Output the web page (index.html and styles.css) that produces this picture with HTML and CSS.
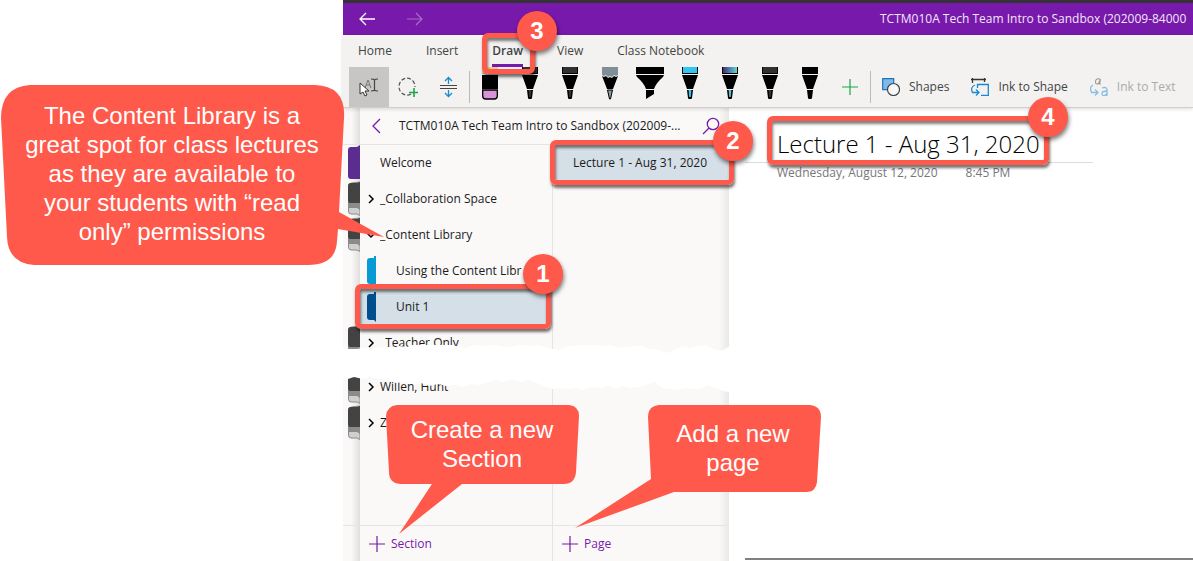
FILE: index.html
```html
<!DOCTYPE html>
<html lang="en">
<head>
  <meta charset="UTF-8">
  <meta name="viewport" content="width=device-width, initial-scale=1.0">
  <title>Content Library</title>
  <link rel="stylesheet" href="styles.css">
</head>
<body>
  <!-- shared shapes -->
  <svg class="defs" width="0" height="0" aria-hidden="true">
    <defs>
      <linearGradient id="galaxy"><stop offset="0" stop-color="#4b2a6b"/><stop offset=".5" stop-color="#4a86b8"/><stop offset="1" stop-color="#6fd0c4"/></linearGradient>
      <symbol id="pen" viewBox="0 0 40 40">
        <path d="M12 0h16v7H12z" fill="#000"/>
        <path d="M13 0h14v6H13z" fill="currentColor"/>
        <path d="M12 8h16l-5 14h-6z" fill="#000"/>
        <path d="M17 23h6l-1 8q-.3 1-1 1h-2q-.7 0-1-1z" fill="#000"/>
        <path d="M18.600 23h2.800l-.6 7h-1.600z" fill="currentColor"/>
      </symbol>
      <symbol id="plus" viewBox="0 0 18 18"><path d="M9 1v16M1 9h16" fill="none" stroke="currentColor" stroke-width="1.200"/></symbol>
      <symbol id="chevron" viewBox="0 0 8 10"><path d="M2 1l4 4-4 4" fill="none" stroke="#000" stroke-width="1.500"/></symbol>
      <symbol id="group" viewBox="0 0 12 36">
        <path d="M12 34.500L9 33H3q-2.500 0-2.500-3V6q0-4 3-4L12 1z" fill="#cfcfcf" stroke="#8a8a8a"/>
        <path d="M12 29L9 27H1V6q0-4 3-4l8-1z" fill="#8b8b8b"/>
        <path d="M12 22H2q-2 0-2-3V5q0-3 3-3h6l3-1z" fill="#434343"/>
      </symbol>
      <symbol id="section" viewBox="0 0 9 30"><path d="M9 30L7 28H3q-3 0-3-3V5q0-3 3-3h4V0h2z" fill="currentColor"/></symbol>
    </defs>
  </svg>

  <div class="app">
    <header class="titleBar">
      <button class="navBtn" aria-label="Back"><svg width="16" height="14" viewBox="0 0 16 14"><path d="M7 1L1 7l6 6M1 7h15" fill="none" stroke="#fff" stroke-width="1.300"/></svg></button>
      <button class="navBtn forward" aria-label="Forward"><svg width="16" height="14" viewBox="0 0 16 14"><path d="M9 1l6 6-6 6M15 7H0" fill="none" stroke="#a86cc8" stroke-width="1.200"/></svg></button>
      <span class="docName">TCTM010A Tech Team Intro to Sandbox (202009-84000</span>
    </header>

    <div class="ribbon">
      <nav class="tabs">
        <a href="#">Home</a>
        <a href="#">Insert</a>
        <a href="#" class="active">Draw<span class="mark markDraw"><b class="badge">3</b></span></a>
        <a href="#">View</a>
        <a href="#">Class Notebook</a>
      </nav>
      <div class="tools">
        <button class="tool selected" aria-label="Select or type">
          <svg width="40" height="40" viewBox="0 0 40 40"><path d="M16 21l3-8 3 8M17 18h4" fill="none" stroke="#777"/><path d="M22 12q3 0 3.500 1 .5-1 3.500-1M25.500 13v10M22 24q3 0 3.500-1 .5 1 3.500 1" fill="none" stroke="#444" stroke-width="1.200"/><path d="M11 16v11l3-2 2 4 2-1-2-4h4z" fill="#fff" stroke="#333"/></svg>
        </button>
        <button class="tool" aria-label="Lasso select">
          <svg width="40" height="40" viewBox="0 0 40 40"><path d="M22 27a8 8.500 0 1 1 4-7" fill="none" stroke="#555" stroke-width="1.200" stroke-dasharray="4 2"/><path d="M25 21v9M20 25.500h9" stroke="#1ea34a" stroke-width="1.600"/></svg>
        </button>
        <button class="tool" aria-label="Insert space">
          <svg width="40" height="40" viewBox="0 0 40 40"><path d="M11 18.500h17M11 21.500h17" stroke="#444"/><path d="M19.500 17v-6M16 14l3.500-3.500L23 14M19.500 23v6M16 26l3.500 3.500L23 26" fill="none" stroke="#1b88d0" stroke-width="1.300"/></svg>
        </button>
        <span class="divider"></span>
        <button class="tool" aria-label="Eraser">
          <svg width="40" height="40" viewBox="0 0 40 40"><path d="M12 0h16v7H12z" fill="#e9cf83"/><path d="M12 8h16v14H12z"/><path d="M12.700 23h14.600v6q0 3-3 3h-8.600q-3 0-3-3z" fill="#d993db" stroke="#000" stroke-width="1.300"/></svg>
        </button>
        <button class="tool dark" aria-label="Pen 1"><svg width="40" height="40"><use href="#pen"/></svg></button>
        <button class="tool dark" aria-label="Pen 2"><svg width="40" height="40"><use href="#pen"/></svg></button>
        <button class="tool" aria-label="Pencil">
          <svg width="40" height="40" viewBox="0 0 40 40"><path d="M12 0h16v8l-2 1-2-1-2 2-2-1-2 1-2-2-2 1-2-1z" fill="#7f8f98"/><path d="M12 9l2 1 2-1 2 2 2-1 2 1 2-2 2 1 2-1-5 13h-6z"/><path d="M17.500 23h5L20.500 32h-1z" fill="#8a9aa2" stroke="#000"/></svg>
        </button>
        <button class="tool" aria-label="Highlighter">
          <svg width="40" height="40" viewBox="0 0 40 40"><path d="M6 0h28v7H6zM6 8h28l-1 2q-7 6-9 12h-8Q14 16 7 10zM16 23h8v4l-8 5z"/></svg>
        </button>
        <button class="tool sky" aria-label="Pen 3"><svg width="40" height="40"><use href="#pen"/></svg></button>
        <button class="tool teal" aria-label="Galaxy pen">
          <svg width="40" height="40" viewBox="0 0 40 40"><use href="#pen"/><path d="M13 0h14v6H13z" fill="url(#galaxy)"/></svg>
        </button>
        <button class="tool dark" aria-label="Pen 4"><svg width="40" height="40"><use href="#pen"/></svg></button>
        <button class="tool black" aria-label="Pen 5"><svg width="40" height="40"><use href="#pen"/></svg></button>
        <button class="tool add" aria-label="Add pen"><svg width="18" height="18"><use href="#plus"/></svg></button>
        <span class="divider"></span>
        <button class="command">
          <svg width="18" height="18" viewBox="0 0 18 18"><path d="M.7.700h11v11H.7z" fill="#80baea" stroke="#1b74bd" stroke-width="1.200"/><circle cx="11.500" cy="11.500" r="6" fill="#f8f8f8" stroke="#444" stroke-width="1.200"/></svg>
          Shapes
        </button>
        <button class="command">
          <svg width="18" height="18" viewBox="0 0 18 18" fill="none"><path d="M0 1.500h15M1.500 0v5M13.500 0v4" stroke="#333" stroke-width="1.300"/><path d="M6.500 10V6.500h10.800v10.800H10M4 7Q-1 9 1.500 14.500h6.500M5 11.500l3 3-3 3" stroke="#1b88d0" stroke-width="1.300"/></svg>
          Ink to Shape
        </button>
        <button class="command" disabled>
          <svg width="18" height="18" viewBox="0 0 18 18" fill="none"><path d="M10 1Q5.500 0 5.500 4q0 3 3 1.500L10.500 1 9.500 6H11" stroke="#999" stroke-width="1.100"/><path d="M3 7Q-1 9 1.500 14.500H8M5 11.500l3 3-3 3M12 10q4.500-1.500 5 1.500V18M17 13q-5 0-5 2.500t2.500 2q2.500-.5 2.500-3" stroke="#83bfe3" stroke-width="1.300"/></svg>
          Ink to Text
        </button>
      </div>
    </div>

    <main class="content">
      <aside class="rail" aria-hidden="true">
        <div class="railHead"></div>
        <div class="railTabs">
          <span class="railTab"><svg class="violet" width="12" height="36" viewBox="0 0 12 36"><path d="M12 34H3q-3 0-3-3V5q0-3 3-3h6l3-2z" fill="currentColor"/></svg></span>
          <span class="railTab"><svg width="12" height="36"><use href="#group"/></svg></span>
          <span class="railTab"><svg width="12" height="36"><use href="#group"/></svg></span>
          <span class="railTab"></span>
          <span class="railTab"></span>
          <span class="railTab"><svg width="12" height="36"><use href="#group"/></svg></span>
          <span class="railTab afterTear"><svg width="12" height="36"><use href="#group"/></svg></span>
          <span class="railTab"><svg width="12" height="36"><use href="#group"/></svg></span>
        </div>
        <div class="railFoot"></div>
      </aside>

      <section class="panel">
        <div class="panelHead">
          <button class="iconBtn" aria-label="Back to notebooks"><svg width="10" height="16" viewBox="0 0 10 16"><path d="M9 1L2 8l7 7" fill="none" stroke="#7719aa" stroke-width="1.300"/></svg></button>
          <span class="notebook">TCTM010A Tech Team Intro to Sandbox (202009-...</span>
          <button class="iconBtn" aria-label="Search"><svg width="18" height="18" viewBox="0 0 18 18"><circle cx="11" cy="7" r="5.700" fill="none" stroke="#7719aa" stroke-width="1.300"/><path d="M7 11l-6 6" stroke="#7719aa" stroke-width="1.300"/></svg></button>
        </div>
        <div class="columns">
          <div class="column sections">
            <ul class="list">
              <li class="row"><span class="arrow"></span><a href="#">Welcome</a></li>
              <li class="row"><span class="arrow"><svg width="8" height="10"><use href="#chevron"/></svg></span><a href="#">_Collaboration Space</a></li>
              <li class="row"><span class="arrow open"><svg width="8" height="10"><use href="#chevron"/></svg></span><a href="#">_Content Library</a></li>
              <li class="row child long"><svg class="cyan" width="9" height="30"><use href="#section"/></svg><a href="#">Using the Content Libr</a></li>
              <li class="row child current"><svg class="navy" width="9" height="30"><use href="#section"/></svg><a href="#">Unit 1</a><span class="mark markUnit"><b class="badge">1</b></span></li>
              <li class="row"><span class="arrow"><svg width="8" height="10"><use href="#chevron"/></svg></span><a href="#">_Teacher Only</a></li>
              <li class="row afterTear"><span class="arrow"><svg width="8" height="10"><use href="#chevron"/></svg></span><a href="#">Willen, Hunt</a></li>
              <li class="row"><span class="arrow"><svg width="8" height="10"><use href="#chevron"/></svg></span><a href="#">Z</a></li>
            </ul>
            <button class="addBtn"><svg width="18" height="18"><use href="#plus"/></svg>Section</button>
          </div>
          <div class="column pages">
            <ul class="list">
              <li class="row current"><a href="#">Lecture 1 - Aug 31, 2020</a><span class="mark markPage"><b class="badge">2</b></span></li>
            </ul>
            <button class="addBtn"><svg width="18" height="18"><use href="#plus"/></svg>Page</button>
          </div>
        </div>
      </section>

      <article class="page">
        <div class="pageTitle">
          <h1>Lecture 1 - Aug 31, 2020</h1>
          <span class="mark markTitle"><b class="badge">4</b></span>
        </div>
        <p class="stamp"><span>Wednesday, August 12, 2020</span><span>8:45 PM</span></p>
        <hr class="pageEnd">
      </article>

      <!-- torn strip across the section list -->
      <svg class="tear" width="386" height="50" viewBox="0 0 386 50" aria-hidden="true">
        <path d="M0 4l14 0 6-1 8 1 10-2 10 1 8-2 8 1 6-3 7 0 6-3 10 3 8-1 12 3 9 2 10-3 9 1 8-2 12 3 11-1 7-2 8 2 9-1 8 3 12 2 9-4 7 0 8-3 7 2 6-1 8 2 7-1 8 3 7-1 8-1 8 0 8 3 9 1 8 3 7-3 8-4 7 2 9-2 8-1 7 4 9 2 6-4 6 0 0 43-5 2-6-1-7-3-8-3-8 4-8 0-7-1-8 2-8-1-7-1-8-6-8 3-8 2-8 1-7-2-8 2-7-2-9 2-8-1-8 3-8-2-7 1-8-1-8 1-8-3-7-3-9-3-8 2-8-3-8 3-8-2-8 2-8 3-8-1-9 3-9-2-8 1-8-2-9 2-8-3-10 1-7-2-8 1-8-3-10-1-8-2-7 2-9-2-6 2-8-1-6 1z" fill="#fff"/>
      </svg>
    </main>
  </div>

  <!-- callouts -->
  <div class="callout library">
    <svg width="390" height="184" viewBox="0 0 390 184"><path d="M30 1H315Q346 2 344 34L339 128 384 153 338 145 337 157Q336 181 308 181H34Q8 179 7 153L1 34Q1 3 30 1z" fill="#ff594b"/></svg>
    <p>The Content Library is a great spot for class lectures as they are available to your students with “read only” permissions</p>
  </div>
  <div class="callout newSection">
    <svg width="194" height="132" viewBox="0 0 194 132"><path d="M11 1H183Q193 2 193 12L190 68Q189 80 178 80H76L13 130 46 80H14Q3 79 3 68L0 12Q1 2 11 1z" fill="#ff594b"/></svg>
    <p>Create a new Section</p>
  </div>
  <div class="callout newPage">
    <svg width="247" height="126" viewBox="0 0 247 126"><path d="M84 1H235Q246 2 246 13L242 78Q241 88 231 88H99L0 124 76 75 73 13Q73 2 84 1z" fill="#ff594b"/></svg>
    <p>Add a new page</p>
  </div>
</body>
</html>
```

FILE: styles.css
```css
*{
  box-sizing: border-box;
}
body{
  margin: 0;
  position: relative;
  min-height: 100vh;
  overflow: hidden;
  background: #fff;
  color: #1b1b1b;
  font: 12px/18px "Open Sans", "Noto Sans", sans-serif;
}
a{
  color: inherit;
  text-decoration: none;
}
button{
  padding: 0;
  border: 0;
  background: none;
  color: inherit;
  font: inherit;
}
svg{
  display: block;
  flex: none;
}
ul, p, h1{
  margin: 0;
  padding: 0;
}
.defs{
  position: absolute;
}
.app{
  display: flex;
  flex-direction: column;
  min-height: 100vh;
  margin-left: 343px;
}

/* title bar */
.titleBar{
  display: flex;
  align-items: center;
  height: 35px;
  padding: 0 0 0 16px;
  border-top: 3px solid #343236;
  background: #7719aa;
  color: #f3e6fa;
  white-space: nowrap;
  overflow: hidden;
}
.navBtn.forward{
  margin-left: 32px;
}
.docName{
  margin-left: 457px;
}

/* ribbon */
.ribbon{
  position: relative;
  z-index: 2;
  border-bottom: 1px solid #d0cfce;
  background: #f3f2f1;
  color: #444;
  box-shadow: 0 1px 4px rgba(0,0,0,.15);
}
.tabs{
  display: flex;
  gap: 34px;
  height: 32px;
  padding-left: 15px;
  line-height: 32px;
}
.tabs a{
  position: relative;
}
.tabs .active{
  font-weight: 600;
  box-shadow: inset 0 -3px #7719aa;
}
.tools{
  display: flex;
  height: 40px;
  padding-left: 6px;
}
.tool{
  width: 40px;
  flex: none;
}
.tool.selected{
  background: #c8c6c4;
}
.tool.dark{
  color: #303030;
}
.tool.sky{
  color: #31c5f4;
}
.tool.teal{
  color: #5fb9c4;
}
.tool.black{
  color: #000;
}
.tool.add{
  display: flex;
  align-items: center;
  justify-content: center;
  color: #1ea34a;
}
.divider{
  width: 1px;
  height: 32px;
  margin-top: 4px;
  flex: none;
  background: #bdbbb9;
}
.command{
  display: flex;
  align-items: center;
  gap: 9px;
  padding: 0 11px;
  white-space: nowrap;
}
.command:disabled{
  color: #aaa;
}

/* notebook area */
.content{
  position: relative;
  display: flex;
  flex: 1;
}
.rail{
  display: flex;
  flex-direction: column;
  width: 17px;
  background: linear-gradient(90deg, #faf9f8 8px, #e0dfde);
}
.railHead{
  height: 37px;
  border-bottom: 1px solid #e6e5e4;
}
.railTabs{
  flex: 1;
}
.railTab{
  display: flex;
  justify-content: flex-end;
  height: 36px;
}
.railFoot{
  height: 36px;
  border-top: 1px solid #e6e5e4;
}
.afterTear{
  margin-top: 8px;
}
.violet{
  color: #5c2d91;
}
.cyan{
  color: #069bd2;
}
.navy{
  color: #004e8c;
}
.panel{
  display: flex;
  flex-direction: column;
  width: 369px;
  flex: none;
  background: linear-gradient(270deg, #e9e8e7, #faf9f8 10px);
}
.panelHead{
  display: flex;
  align-items: center;
  height: 37px;
  padding: 0 9px 0 11px;
  border-bottom: 1px solid #e6e5e4;
}
.notebook{
  flex: 1;
  padding-left: 18px;
  white-space: nowrap;
  overflow: hidden;
}
.columns{
  display: flex;
  flex: 1;
}
.column{
  display: flex;
  flex-direction: column;
}
.sections{
  width: 193px;
  border-right: 1px solid #e6e5e4;
}
.pages{
  flex: 1;
}
.list{
  flex: 1;
  list-style: none;
}
.row{
  position: relative;
  display: flex;
  align-items: center;
  height: 36px;
}
.row a{
  flex: 1;
  white-space: nowrap;
  overflow: hidden;
}
.arrow{
  display: flex;
  width: 20px;
  padding-left: 7px;
}
.arrow.open svg{
  transform: rotate(90deg);
}
.child{
  gap: 20px;
  padding-left: 7px;
}
.long{
  padding-right: 24px;
}
.current{
  background: #d5dfe8;
}
.pages .row{
  padding-left: 20px;
}
.addBtn{
  display: flex;
  align-items: center;
  gap: 5px;
  height: 36px;
  padding-left: 8px;
  border-top: 1px solid #e6e5e4;
  color: #7719aa;
}
.page{
  display: flex;
  flex-direction: column;
  flex: 1;
  padding: 17px 0 1px 16px;
}
.pageTitle{
  position: relative;
  width: 348px;
  max-width: 100%;
  padding-left: 32px;
  border-bottom: 1px solid #dcdcdc;
}
.pageTitle h1{
  color: #000;
  font-size: 24px;
  font-weight: 300;
  line-height: 37px;
  white-space: nowrap;
}
.stamp{
  display: flex;
  gap: 28px;
  padding-left: 32px;
  color: #777;
  line-height: 20px;
}
.pageEnd{
  width: 100%;
  height: 2px;
  margin: auto 0 0;
  border: 0;
  background: #808080;
}
.tear{
  position: absolute;
  left: 0;
  top: 237px;
}

/* numbered highlights */
.mark{
  position: absolute;
  z-index: 3;
  border: 5px solid #ff594b;
  border-radius: 6px;
  box-shadow: 1px 3px 3px rgba(0,0,0,.55), inset 1px 3px 3px rgba(0,0,0,.5);
}
.badge{
  position: absolute;
  top: -24px;
  right: -24px;
  width: 40px;
  height: 40px;
  border-radius: 50%;
  background: #ff594b;
  box-shadow: 1px 3px 4px rgba(0,0,0,.5);
  color: #fff;
  font: bold 24px/40px "Liberation Sans", Arial, sans-serif;
  text-align: center;
}
.markDraw{
  inset: -2px -12px -7px -10px;
}
.markDraw .badge{
  top: -27px;
  right: -27px;
}
.markUnit{
  inset: -5px 1px -4px -5px;
}
.markUnit .badge{
  top: -35px;
  right: -17px;
}
.markPage{
  inset: -5px -5px -4px -3px;
}
.markTitle{
  inset: -9px 44px -3px 22px;
}

.callout{
  position: absolute;
  z-index: 4;
  color: #fff;
  font: 24px/29px "Liberation Sans", Arial, sans-serif;
  text-align: center;
}
.callout p{
  position: absolute;
}
.library{
  left: 0;
  top: 84px;
}
.library p{
  left: 24px;
  top: 17px;
  width: 296px;
}
.newSection{
  left: 386px;
  top: 404px;
}
.newSection p{
  left: 16px;
  top: 11px;
  width: 160px;
}
.newPage{
  left: 575px;
  top: 404px;
}
.newPage p{
  left: 88px;
  top: 15px;
  width: 140px;
}
```
